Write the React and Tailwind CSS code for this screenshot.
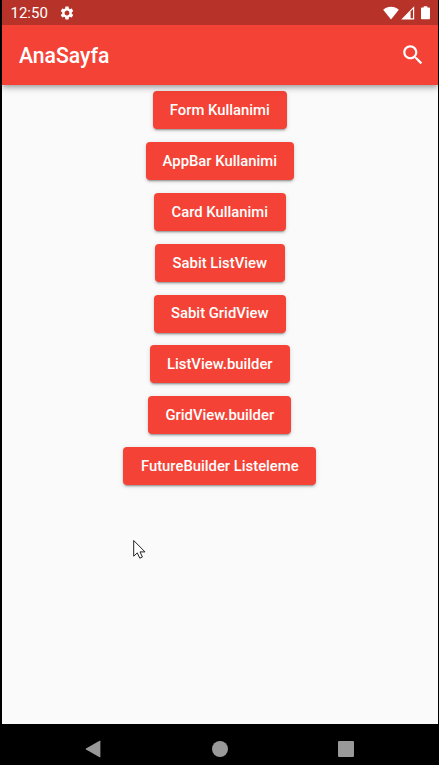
import React from 'react';

const buttons = [
  { label: 'Form Kullanimi', width: 'w-[134.500px]' },
  { label: 'AppBar Kullanimi', width: 'w-[148px]' },
  { label: 'Card Kullanimi', width: 'w-[131.500px]' },
  { label: 'Sabit ListView', width: 'w-[129.500px]' },
  { label: 'Sabit GridView', width: 'w-[132px]' },
  { label: 'ListView.builder', width: 'w-[140px]' },
  { label: 'GridView.builder', width: 'w-[143px]' },
  { label: 'FutureBuilder Listeleme', width: 'w-[193px]' },
];

function StatusBar() {
  return (
    <div className="relative z-20 flex h-[25px] shrink-0 items-center bg-[#b73229] pl-[8.500px] pr-[8px] text-white">
      <span className="pt-[2px] text-[15px] leading-none">12:50</span>
      <svg className="ml-[11px] h-4 w-4" viewBox="0 0 24 24" fill="currentColor">
        <path d="M19.14 12.94c.04-.3.06-.61.06-.94 0-.32-.02-.64-.07-.94l2.03-1.58c.18-.14.23-.41.12-.61l-1.92-3.32c-.12-.22-.37-.29-.59-.22l-2.39.96c-.5-.38-1.03-.7-1.62-.94l-.36-2.54c-.04-.24-.24-.41-.48-.41h-3.84c-.24 0-.43.17-.47.41l-.36 2.54c-.59.24-1.13.57-1.62.94l-2.39-.96c-.22-.08-.47 0-.59.22L2.74 8.87c-.12.21-.08.47.12.61l2.03 1.58c-.05.3-.09.63-.09.94s.02.64.07.94l-2.03 1.58c-.18.14-.23.41-.12.61l1.92 3.32c.12.22.37.29.59.22l2.39-.96c.5.38 1.03.7 1.62.94l.36 2.54c.05.24.24.41.48.41h3.84c.24 0 .44-.17.47-.41l.36-2.54c.59-.24 1.13-.56 1.62-.94l2.39.96c.22.08.47 0 .59-.22l1.92-3.32c.12-.22.07-.47-.12-.61l-2.01-1.58zM12 15.6c-1.98 0-3.6-1.62-3.6-3.6s1.62-3.6 3.6-3.6 3.6 1.62 3.6 3.6-1.62 3.6-3.6 3.6z" />
      </svg>
      <svg className="ml-auto h-[14px] w-[16px]" viewBox="0 0 16 14" fill="currentColor">
        <path d="M0.2 3.7C4.3-.2 11.7-.2 15.8 3.7L8 13.4Z" />
      </svg>
      <svg className="ml-[1.500px] h-[14px] w-[14px]" viewBox="0 0 14 14">
        <path d="M13.2 .2V13.4H.2Z" fill="white" />
        <path d="M9.6 5.4L12 3V12.2H9.6Z" fill="#b73229" />
      </svg>
      <svg className="ml-[6.500px] h-[14px] w-[9px]" viewBox="0 0 9 14" fill="currentColor">
        <path d="M0 2.3Q0 1.5.8 1.5H2.7V.3H6.3V1.5H8.2Q9 1.5 9 2.3V12.4Q9 13.2 8.2 13.2H.8Q0 13.2 0 12.4Z" />
      </svg>
    </div>
  );
}

function AppBar() {
  return (
    <header className="relative z-10 flex h-[60px] shrink-0 items-center justify-between bg-[#f44336] pl-[17px] pr-[12.500px] text-white shadow-[0_2px_4px_-1px_rgba(0,0,0,0.2),0_4px_5px_rgba(0,0,0,0.14),0_1px_10px_rgba(0,0,0,0.12)]">
      <h1 className="pt-[2px] text-[21.200px] font-medium tracking-[-0.030px]">AnaSayfa</h1>
      <svg className="h-[26px] w-[26px]" viewBox="0 0 24 24" fill="currentColor">
        <path d="M15.5 14h-.79l-.28-.27C15.41 12.59 16 11.11 16 9.5 16 5.91 13.09 3 9.5 3S3 5.91 3 9.5 5.91 16 9.5 16c1.61 0 3.09-.59 4.23-1.57l.27.28v.79l5 4.99L20.49 19l-4.99-5zm-6 0C7.01 14 5 11.99 5 9.5S7.01 5 9.5 5 14 7.01 14 9.5 11.99 14 9.5 14z" />
      </svg>
    </header>
  );
}

function NavBar() {
  return (
    <nav className="flex h-[41px] shrink-0 items-center bg-black pl-[83px] pr-[84.500px] pt-[9px] text-[#999]">
      <div className="flex w-full items-center justify-between">
        <svg className="h-[18px] w-[16px]" viewBox="0 0 16 18" fill="currentColor">
          <path d="M14.6.8Q15.4.4 15.4 1.2V16.8Q15.4 17.6 14.6 17.2L1 9.5Q.2 9 1 8.5Z" />
        </svg>
        <span className="ml-px h-4 w-4 rounded-full bg-[#999]" />
        <span className="h-4 w-4 rounded-[1px] bg-[#999]" />
      </div>
    </nav>
  );
}

export default function App() {
  return (
    <div className="relative flex h-[765px] w-[439px] flex-col overflow-hidden bg-black pl-[2px] pr-px font-['Roboto',sans-serif]">
      <StatusBar />
      <AppBar />
      <main className="flex flex-1 flex-col items-center gap-[12.860px] bg-[#fafafa] pr-[0.400px] pt-[6.200px]">
        {buttons.map(({ label, width }) => (
          <button
            key={label}
            className={`${width} h-[38px] shrink-0 whitespace-nowrap rounded-[4px] bg-[#f44336] text-[14.840px] font-medium text-white shadow-[0_3px_1px_-2px_rgba(0,0,0,0.2),0_2px_2px_rgba(0,0,0,0.14),0_1px_5px_rgba(0,0,0,0.12)]`}
          >
            {label}
          </button>
        ))}
      </main>
      <NavBar />
      <svg className="absolute left-[133px] top-[539px] h-[21px] w-[13px]" viewBox="0 0 13 21">
        <path d="M.7 1.5V17.2L4.3 13.9L6.8 19.2L9.4 18L7 12.9H12Z" fill="white" stroke="#222" strokeWidth="1" />
      </svg>
    </div>
  );
}
